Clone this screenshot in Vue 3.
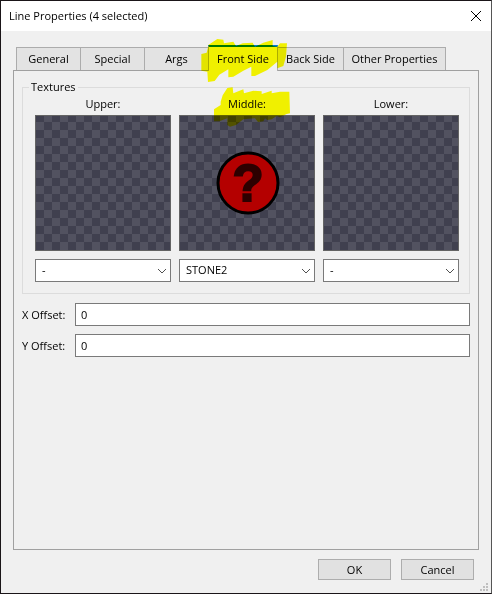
<script setup>
import { ref } from 'vue'

const tabs = ['General', 'Special', 'Args', 'Front Side', 'Back Side', 'Other Properties']
const activeTab = ref('Front Side')

const textures = ref([
  { id: 'upper', label: 'Upper:', value: '-', missing: false },
  { id: 'middle', label: 'Middle:', value: 'STONE2', missing: true },
  { id: 'lower', label: 'Lower:', value: '-', missing: false }
])
const choices = ['-', 'STONE2']

const offsets = ref([
  { id: 'x-offset', label: 'X Offset:', value: '0' },
  { id: 'y-offset', label: 'Y Offset:', value: '0' }
])
</script>

<template>
  <main class="dialog">
    <header class="titlebar">
      <h1>Line Properties (4 selected)</h1>
      <button class="close" type="button" aria-label="Close">
        <svg width="12" height="12" viewBox="0 0 12 12"><path d="M1 1L11 11M11 1L1 11" /></svg>
      </button>
    </header>

    <div class="body">
      <nav class="tabs" role="tablist">
        <button
          v-for="tab in tabs"
          :key="tab"
          type="button"
          role="tab"
          class="tab"
          :class="{ active: tab === activeTab }"
          :aria-selected="tab === activeTab"
          @click="activeTab = tab"
        >{{ tab }}</button>
      </nav>

      <section class="panel" role="tabpanel">
        <fieldset class="group">
          <legend>Textures</legend>
          <div v-for="t in textures" :key="t.id" class="texture">
            <label :for="t.id">{{ t.label }}</label>
            <div class="preview">
              <svg v-if="t.missing" class="unknown" viewBox="0 0 64 64">
                <circle cx="33" cy="32" r="30" />
                <text x="33" y="50" text-anchor="middle">?</text>
              </svg>
            </div>
            <div class="combo">
              <select :id="t.id" v-model="t.value">
                <option v-for="c in choices" :key="c">{{ c }}</option>
              </select>
              <svg class="chevron" width="10" height="6" viewBox="0 0 10 6"><path d="M1 1L5 5L9 1" /></svg>
            </div>
          </div>
        </fieldset>

        <div v-for="o in offsets" :key="o.id" class="offset">
          <label :for="o.id">{{ o.label }}</label>
          <input :id="o.id" v-model="o.value" type="text">
        </div>
      </section>

      <footer class="actions">
        <button type="button">OK</button>
        <button type="button">Cancel</button>
      </footer>
    </div>

    <svg class="grip" width="8" height="8" viewBox="0 0 8 8">
      <path d="M6 0h2v2h-2zM3 3h2v2h-2zM6 3h2v2h-2zM0 6h2v2h-2zM3 6h2v2h-2zM6 6h2v2h-2z" />
    </svg>

    <svg class="marker" width="130" height="100" viewBox="0 0 390 300">
      <path d="M64 72L80 68L86 44L112 27L130 29L132 40L160 35L168 48L188 40L218 38L225 50L250 38L278 30L278 48L292 50L300 40L321 40L318 80L310 108L292 115L292 95L262 120L225 138L214 138L214 110L190 122L160 140L145 142L145 118L118 134L104 153L84 156L82 125L64 122Z" />
      <path d="M122 215L128 196L142 174L158 172L160 190L190 178L192 190L220 182L245 184L245 192L275 182L275 190L300 185L328 185L330 250L320 252L300 262L290 258L275 268L262 270L255 265L250 274L234 276L225 265L190 268L168 285L150 290L142 285L142 265L118 274L102 274L102 238L122 225Z" />
    </svg>
  </main>
</template>

<style>
body {
  margin: 0;
  background: #f0f0f0;
}
</style>

<style scoped>
.dialog {
  position: relative;
  box-sizing: border-box;
  min-height: 100vh;
  display: flex;
  flex-direction: column;
  border: 1px solid #1a1518;
  border-right-color: #555;
  background: #f0f0f0;
  color: #000;
  font: 11px/16px "Open Sans", "Noto Sans", sans-serif;
}

button,
input,
select {
  box-sizing: border-box;
  margin: 0;
  border-radius: 0;
  color: inherit;
  font: inherit;
}

.titlebar {
  display: flex;
  align-items: center;
  justify-content: space-between;
  height: 30px;
  padding: 0 9px 0 8px;
  background: #fff;
}

h1 {
  margin: 0;
  font: inherit;
}

.close {
  display: flex;
  padding: 0;
  border: 0;
  background: none;
}

.close path {
  fill: none;
  stroke: #000;
}

.body {
  flex: 1;
  display: flex;
  flex-direction: column;
  padding: 14px 12px 13px;
}

.tabs {
  display: grid;
  grid-template-columns: 64px 64px 64px 69px 66px 103px;
  align-items: end;
  padding-left: 3px;
  height: 26px;
  margin-bottom: -1px;
}

.tab {
  height: 24px;
  margin-right: -1px;
  padding: 0;
  border: 1px solid #acacac;
  background: #e3e3e3;
  white-space: nowrap;
}

.tab.active {
  height: 26px;
  padding-bottom: 1px;
  border-top: 2px solid #0078d7;
  border-bottom: 0;
  background: #f0f0f0;
  z-index: 1;
}

.tab:last-child {
  margin-right: 0;
}

.panel {
  flex: 1;
  padding: 8px;
  border: 1px solid #a0a0a0;
}

.group {
  display: grid;
  grid-template-columns: repeat(3, 1fr);
  gap: 8px;
  min-width: 0;
  margin: 0 0 9px;
  padding: 1px 10px 11px 12px;
  border: 1px solid #dcdcdc;
}

legend {
  margin-left: -6px;
  padding: 0 2px;
}

.texture {
  display: flex;
  flex-direction: column;
}

.texture label {
  margin-bottom: 3px;
  text-align: center;
}

.preview {
  box-sizing: border-box;
  aspect-ratio: 1;
  display: grid;
  place-items: center;
  margin-bottom: 8px;
  border: 1px solid #646464;
  background: conic-gradient(#525260 25%, #40404f 0 50%, #525260 0 75%, #40404f 0) 0 -2px / 16px 16px;
}

.unknown {
  width: 64px;
  overflow: visible;
}

.unknown circle {
  fill: #b40000;
  stroke: #000;
  stroke-width: 3px;
}

.unknown text {
  fill: #2d0000;
  stroke: #2d0000;
  stroke-width: 2px;
  font: 700 51px "Liberation Sans", sans-serif;
}

.combo {
  position: relative;
}

.combo select {
  display: block;
  width: 100%;
  height: 23px;
  padding: 0 20px 1px 6px;
  border: 1px solid #7a7a7a;
  background: #fff;
  appearance: none;
}

.chevron {
  position: absolute;
  right: 4px;
  top: 9px;
  pointer-events: none;
}

.chevron path {
  fill: none;
  stroke: #505050;
}

.offset {
  display: grid;
  grid-template-columns: 53px 1fr;
  align-items: center;
  margin-bottom: 8px;
}

.offset label {
  white-space: nowrap;
}

.offset input {
  width: 100%;
  height: 23px;
  padding: 0 5px 1px;
  border: 1px solid #7a7a7a;
  background: #fff;
}

.actions {
  display: flex;
  justify-content: flex-end;
  gap: 10px;
  padding: 9px 5px 0;
}

.actions button {
  width: 73px;
  height: 21px;
  padding: 0;
  border: 1px solid #adadad;
  background: #e1e1e1;
}

.grip {
  position: absolute;
  right: 3px;
  bottom: 2px;
  fill: #bfbfbf;
}

.marker {
  position: absolute;
  left: 179px;
  top: 29px;
  z-index: 2;
  fill: #ff0;
  mix-blend-mode: multiply;
  pointer-events: none;
}
</style>
